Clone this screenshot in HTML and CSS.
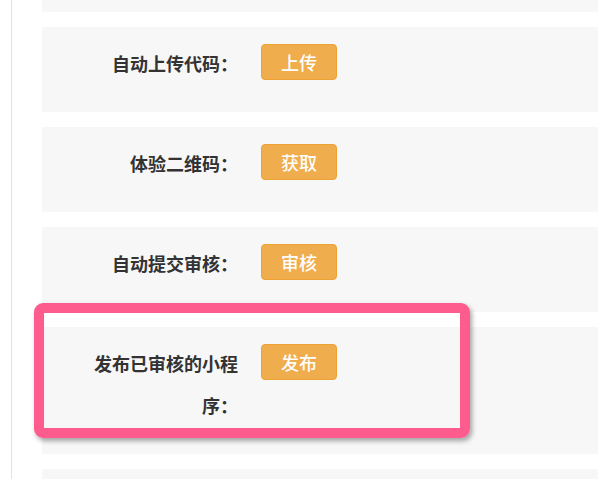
FILE: index.html
```html
<!DOCTYPE html>
<html lang="zh-CN">

<head>
  <meta charset="UTF-8">
  <meta name="viewport" content="width=device-width, initial-scale=1.0">
  <title>小程序发布</title>
  <link rel="stylesheet" href="styles.css">
</head>

<body>
  <div class="panel">
    <div class="form-row form-row-cut"></div>

    <div class="form-row">
      <label class="form-label">自动上传代码：</label>
      <button class="btn-warning" type="button">上传</button>
    </div>

    <div class="form-row">
      <label class="form-label">体验二维码：</label>
      <button class="btn-warning" type="button">获取</button>
    </div>

    <div class="form-row">
      <label class="form-label">自动提交审核：</label>
      <button class="btn-warning" type="button">审核</button>
    </div>

    <div class="form-row">
      <label class="form-label">发布已审核的小程序：</label>
      <button class="btn-warning" type="button">发布</button>
      <!-- 标注框 -->
      <div class="highlight"></div>
    </div>

    <div class="form-row"></div>
  </div>
</body>

</html>
```

FILE: styles.css
```css
body {
  margin: 0;
  padding-left: 11px;
  background: #fff;
  font-family: "Noto Sans CJK SC", "Noto Sans", sans-serif;
  overflow: hidden;
}

.panel {
  height: 479px;
  overflow: hidden;
  border-left: 1px solid #e2e2e2;
  padding-left: 30px;
  display: flex;
  flex-direction: column;
  gap: 15px;
}

.form-row {
  position: relative;
  flex-shrink: 0;
  display: flex;
  align-items: flex-start;
  background: #f7f7f7;
  padding: 15px 0 28px 46px;
  min-height: 42px;
}

.form-row-cut {
  min-height: 0;
  height: 12px;
  padding: 0;
}

.form-label {
  width: 150px;
  margin-right: 23px;
  text-align: right;
  font-size: 18px;
  font-weight: bold;
  line-height: 42px;
  color: #333;
}

.btn-warning {
  margin-top: 2px;
  padding: 6px 19px;
  font-family: inherit;
  font-size: 18px;
  font-weight: 500;
  line-height: 22px;
  color: #fff;
  background: #f0ad4e;
  border: 1px solid #eea236;
  border-radius: 4px;
  cursor: pointer;
}

.highlight {
  position: absolute;
  top: -24px;
  left: -8px;
  width: 416px;
  height: 115px;
  border: 10px solid #fe5c8f;
  border-radius: 9px;
  box-shadow: 2px 3px 5px rgba(0, 0, 0, 0.35);
  pointer-events: none;
}
```
